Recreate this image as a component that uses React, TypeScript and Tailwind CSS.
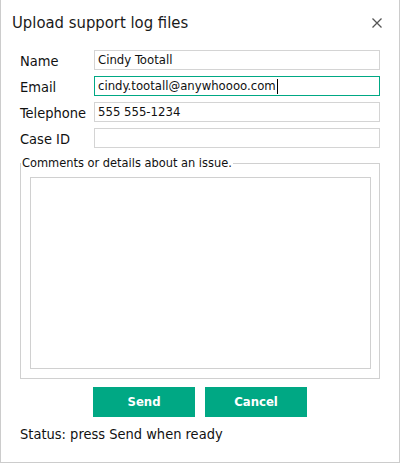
import React from "react";

const font = "font-['DejaVu_Sans_Condensed','Liberation_Sans',sans-serif]";

function Field({ label, value, focused }: { label: string; value: string; focused?: boolean }) {
  return (
    <div className="flex h-[20px] items-center">
      <div className="w-[74px] text-[14.5px] leading-[16px] pt-[2px] text-[#111]">{label}</div>
      <div
        className={`flex-1 h-[20px] border ${focused ? "border-[#00a884]" : "border-[#d4d4d4]"} px-[3px] flex items-center text-[13px] leading-[16px] text-[#111]`}
      >
        <span>{value}</span>
        {focused && <span className="ml-[1px] inline-block w-[1px] h-[15px] bg-black" />}
      </div>
    </div>
  );
}

export default function App() {
  return (
    <div className={`w-[400px] h-[463px] bg-white border-x border-b border-[#cccccc] flex flex-col ${font}`}>
      <div className="flex justify-between items-start pl-[11px] pr-[17px] pt-[14px]">
        <h1 className="text-[16.5px] leading-[18px] text-[#1a1a1a]">Upload support log files</h1>
        <button className="mt-[4px] w-[10px] h-[10px] flex" aria-label="Close">
          <svg width="10" height="10" viewBox="0 0 10 10" fill="none">
            <path d="M0.5 0.5L9.5 9.5M9.5 0.5L0.5 9.5" stroke="#555" strokeWidth="1.3" />
          </svg>
        </button>
      </div>
      <div className="flex flex-col px-[19px]">
        <div className="mt-[18px] flex flex-col gap-[6px]">
          <Field label="Name" value="Cindy Tootall" />
          <Field label="Email" value="cindy.tootall@anywhoooo.com" focused />
          <Field label="Telephone" value="555 555-1234" />
          <Field label="Case ID" value="" />
        </div>
        <fieldset className="mt-[7px] border border-[#d0d0d0]">
          <legend className="px-[1px] text-[12.7px] leading-[16px] text-[#111]">
            Comments or details about an issue.
          </legend>
          <div className="mt-[6px] mb-[9px] ml-[9px] mr-[8px] h-[192px] border border-[#d0d0d0]" />
        </fieldset>
        <div className="mt-[8px] flex justify-center gap-[10px]">
          <button className="w-[102px] h-[30px] bg-[#00a884] text-white font-bold text-[13px]">Send</button>
          <button className="w-[102px] h-[30px] bg-[#00a884] text-white font-bold text-[13px]">Cancel</button>
        </div>
        <div className="mt-[9px] text-[14.5px] leading-[17px] text-[#111]">Status: press Send when ready</div>
      </div>
    </div>
  );
}
